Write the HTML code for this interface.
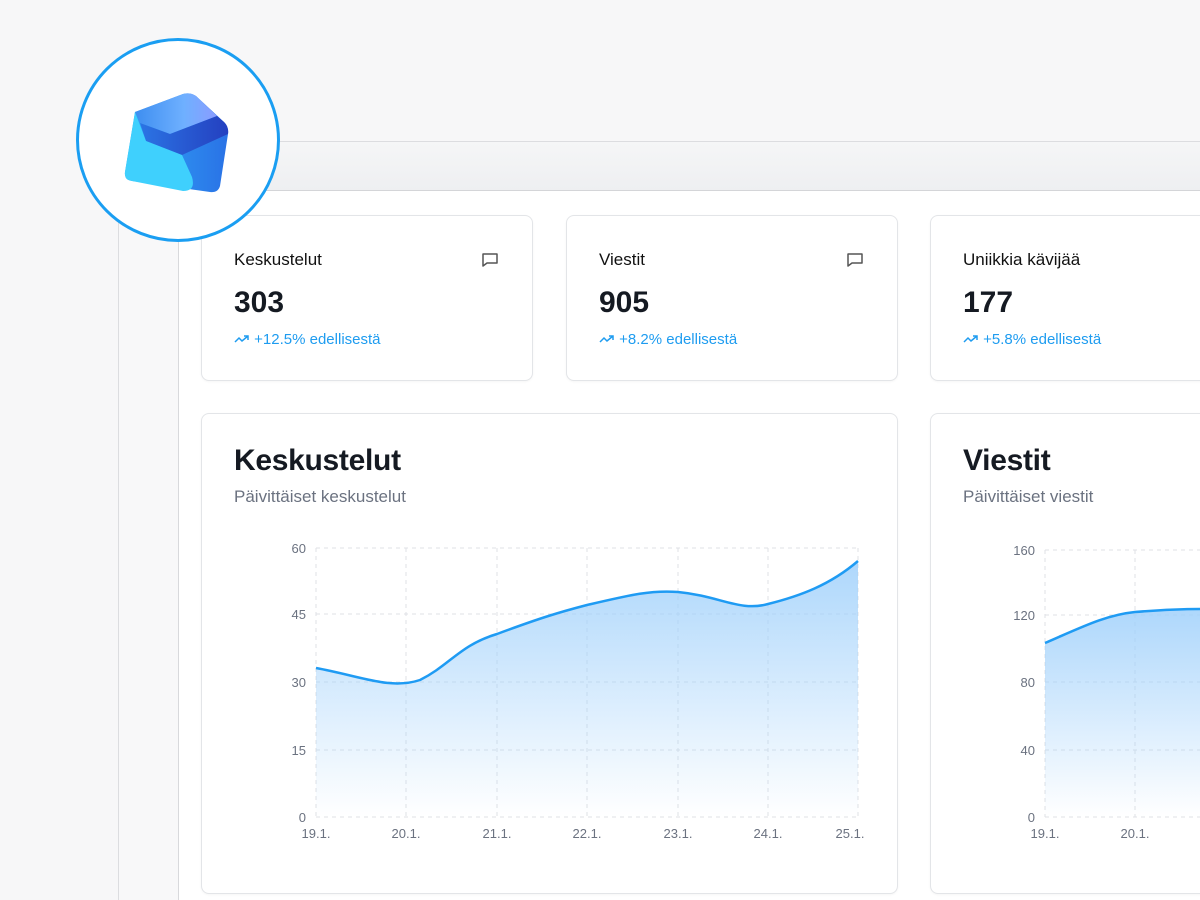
<!DOCTYPE html>
<html><head><meta charset="utf-8"><style>
*{margin:0;padding:0;box-sizing:border-box}
html,body{width:1200px;height:900px;overflow:hidden}
body{background:#f7f7f8;font-family:"Liberation Sans",sans-serif;position:relative;color:#111827}
.panel{position:absolute;left:118px;top:141px;width:1100px;height:800px;background:#fff;border:1px solid #dcdde0}
.hdr{position:absolute;left:0;top:0;right:0;height:49px;background:linear-gradient(180deg,#f5f6f7,#eeeff1);border-bottom:1px solid #d4d5d8}
.side{position:absolute;left:0;top:49px;width:60px;bottom:0;background:#f8f8f9;border-right:1px solid #d8d9dc}
.card{position:absolute;background:#fff;border:1px solid #e3e5e8;border-radius:8px;box-shadow:0 1px 2px rgba(0,0,0,.04)}
.lbl{position:absolute;left:32px;top:34px;font-size:17px;color:#111}
.num{position:absolute;left:32px;top:70px;font-size:30px;font-weight:bold;color:#151a22}
.chg{position:absolute;left:32px;top:115px;font-size:15px;color:#1e9cf0}
.ico{position:absolute;right:32px;top:34px}
.ttl{position:absolute;left:32px;top:30px;font-size:30px;font-weight:bold;color:#151a22;letter-spacing:-.3px}
.sub{position:absolute;left:32px;top:73px;font-size:17px;color:#6b7280}
.logo{position:absolute;left:76px;top:38px;width:204px;height:204px;border-radius:50%;border:3px solid #1a9ef2;background:#fff}
</style></head><body>
<div class="panel"><div class="hdr"></div><div class="side"></div></div>

<div class="card" style="left:201px;top:215px;width:332px;height:166px">
<div class="lbl">Keskustelut</div>
<svg class="ico" width="20" height="20" viewBox="0 0 20 20"><path d="M3 4h14v9H7l-4 3z" fill="none" stroke="#555" stroke-width="1.5" stroke-linejoin="round"/></svg>
<div class="num">303</div>
<div class="chg"><svg width="16" height="10" viewBox="0 0 16 10"><path d="M1 8l4-4 3 3 6-5M10 2h4v4" fill="none" stroke="#1e9cf0" stroke-width="1.5"/></svg> +12.5% edellisestä</div>
</div>
<div class="card" style="left:566px;top:215px;width:332px;height:166px">
<div class="lbl">Viestit</div>
<svg class="ico" width="20" height="20" viewBox="0 0 20 20"><path d="M3 4h14v9H7l-4 3z" fill="none" stroke="#555" stroke-width="1.5" stroke-linejoin="round"/></svg>
<div class="num">905</div>
<div class="chg"><svg width="16" height="10" viewBox="0 0 16 10"><path d="M1 8l4-4 3 3 6-5M10 2h4v4" fill="none" stroke="#1e9cf0" stroke-width="1.5"/></svg> +8.2% edellisestä</div>
</div>
<div class="card" style="left:930px;top:215px;width:332px;height:166px">
<div class="lbl">Uniikkia kävijää</div>
<div class="num">177</div>
<div class="chg"><svg width="16" height="10" viewBox="0 0 16 10"><path d="M1 8l4-4 3 3 6-5M10 2h4v4" fill="none" stroke="#1e9cf0" stroke-width="1.5"/></svg> +5.8% edellisestä</div>
</div>

<div class="card" style="left:201px;top:413px;width:697px;height:481px">
<div class="ttl">Keskustelut</div><div class="sub">Päivittäiset keskustelut</div></div>
<div class="card" style="left:930px;top:413px;width:400px;height:481px">
<div class="ttl">Viestit</div><div class="sub">Päivittäiset viestit</div></div>

<svg style="position:absolute;left:0;top:0" width="1200" height="900" font-family="Liberation Sans" font-size="13" fill="#6b7280">
<defs><linearGradient id="g" x1="0" y1="0" x2="0" y2="1"><stop offset="0" stop-color="#9fd0fb" stop-opacity=".85"/><stop offset="1" stop-color="#9fd0fb" stop-opacity="0"/></linearGradient></defs>
<g stroke="#dfe1e5" stroke-dasharray="4 4" fill="none">
<path d="M316 548H858M316 614H858M316 682H858M316 750H858M316 817H858"/>
<path d="M316 548V817M406 548V817M497 548V817M587 548V817M678 548V817M768 548V817M858 548V817"/>
<path d="M1045 550H1200M1045 615H1200M1045 682H1200M1045 750H1200M1045 817H1200M1045 550V817M1135 550V817"/>
</g>
<path d="M316 668C360 676 390 690 420 680C450 665 460 645 497 634C540 618 560 612 587 605C630 595 650 590 678 592C720 596 740 612 768 604C800 596 830 585 858 561V817H316Z" fill="url(#g)"/>
<path d="M316 668C360 676 390 690 420 680C450 665 460 645 497 634C540 618 560 612 587 605C630 595 650 590 678 592C720 596 740 612 768 604C800 596 830 585 858 561" fill="none" stroke="#1f9bf3" stroke-width="2.5"/>
<path d="M1045 643C1080 628 1105 615 1135 612C1160 610 1180 609 1200 609V817H1045Z" fill="url(#g)"/>
<path d="M1045 643C1080 628 1105 615 1135 612C1160 610 1180 609 1200 609" fill="none" stroke="#1f9bf3" stroke-width="2.5"/>
<g text-anchor="end"><text x="306" y="553">60</text><text x="306" y="619">45</text><text x="306" y="687">30</text><text x="306" y="755">15</text><text x="306" y="822">0</text>
<text x="1035" y="555">160</text><text x="1035" y="620">120</text><text x="1035" y="687">80</text><text x="1035" y="755">40</text><text x="1035" y="822">0</text></g>
<g text-anchor="middle"><text x="316" y="838">19.1.</text><text x="406" y="838">20.1.</text><text x="497" y="838">21.1.</text><text x="587" y="838">22.1.</text><text x="678" y="838">23.1.</text><text x="768" y="838">24.1.</text><text x="850" y="838">25.1.</text>
<text x="1045" y="838">19.1.</text><text x="1135" y="838">20.1.</text></g>
</svg>

<div class="logo"></div>
<svg style="position:absolute;left:0;top:0" width="300" height="260">
<defs>
<linearGradient id="lb" x1="0" y1="0" x2="1" y2="0"><stop offset="0" stop-color="#2fa8f8"/><stop offset="1" stop-color="#2a72e6"/></linearGradient>
<linearGradient id="lt" x1="0" y1="0" x2="1" y2="0"><stop offset="0" stop-color="#3d8ef0"/><stop offset=".6" stop-color="#6fb0ff"/><stop offset="1" stop-color="#8a9cff"/></linearGradient>
<linearGradient id="ld" x1="0" y1="0" x2="1" y2="0"><stop offset="0" stop-color="#2b74e4"/><stop offset="1" stop-color="#2440c0"/></linearGradient>
</defs>
<path d="M135 112L183 94Q190 92 196 96L224 122Q229 127 228 134L220 186Q218 193 210 192L132 181Q124 180 125 172Z" fill="url(#lb)"/>
<path d="M135 112L183 94Q190 92 196 96L217 116L170 134L140 123Z" fill="url(#lt)"/>
<path d="M140 123L170 134L217 116L224 122Q229 127 228 134L182 155L146 141Z" fill="url(#ld)"/>
<path d="M135 112L146 141L182 155L192 177Q196 191 183 191L132 181Q124 180 125 172Z" fill="#3fd0fd"/>
</svg>
</body></html>
